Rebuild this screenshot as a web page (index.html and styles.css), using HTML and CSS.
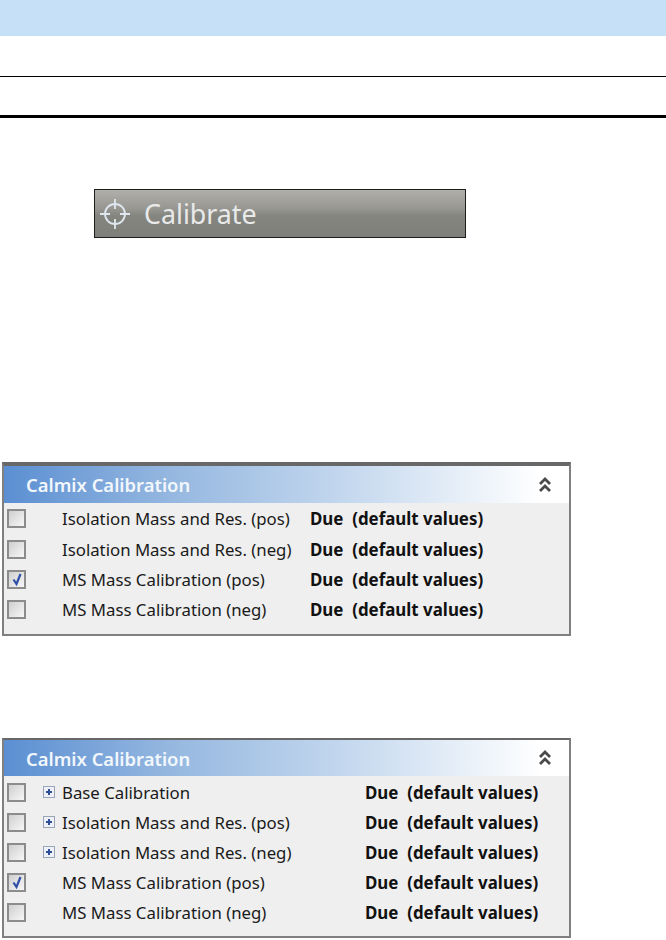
FILE: index.html
```html
<!DOCTYPE html>
<html lang="en">
<head>
<meta charset="utf-8">
<title>Calibrate</title>
<link rel="stylesheet" href="styles.css">
</head>
<body>
<div class="band"></div>
<div class="thin-rule"></div>
<div class="thick-rule"></div>
<div class="calibrate">
  <svg class="target" width="34" height="36" viewBox="0 0 34 36" fill="none" stroke="#dfe8f0">
    <circle cx="17" cy="18" r="10" stroke-width="1.8"/>
    <path d="M17 3V13M17 23V33M2 18H12M22 18H32" stroke-width="1.8"/>
  </svg>
  <span class="calibrate-label">Calibrate</span>
</div>
<section class="panel panel-a">
  <header class="panel-head"><span class="panel-title">Calmix Calibration</span>
    <svg class="chev" width="14" height="16" viewBox="0 0 14 16" fill="none" stroke="#4a4a4a" stroke-width="2.8"><path d="M2 7L7 2L12 7M2 14L7 9L12 14"/></svg>
  </header>
  <div class="rows">
    <div class="row"><span class="box"></span><span class="exp-slot"></span><span class="lbl">Isolation Mass and Res. (pos)</span><span class="status">Due&nbsp; (default values)</span></div>
    <div class="row"><span class="box"></span><span class="exp-slot"></span><span class="lbl">Isolation Mass and Res. (neg)</span><span class="status">Due&nbsp; (default values)</span></div>
    <div class="row"><span class="box"><svg width="14" height="14" viewBox="0 0 14 14" fill="none" stroke="#2f4fa8" stroke-width="2.2"><path d="M3.5 7.5L6.5 12L10.5 2"/></svg></span><span class="exp-slot"></span><span class="lbl">MS Mass Calibration (pos)</span><span class="status">Due&nbsp; (default values)</span></div>
    <div class="row"><span class="box"></span><span class="exp-slot"></span><span class="lbl">MS Mass Calibration (neg)</span><span class="status">Due&nbsp; (default values)</span></div>
  </div>
</section>
<section class="panel panel-b">
  <header class="panel-head"><span class="panel-title">Calmix Calibration</span>
    <svg class="chev" width="14" height="16" viewBox="0 0 14 16" fill="none" stroke="#4a4a4a" stroke-width="2.8"><path d="M2 7L7 2L12 7M2 14L7 9L12 14"/></svg>
  </header>
  <div class="rows">
    <div class="row"><span class="box"></span><span class="exp-slot"><span class="exp"></span></span><span class="lbl">Base Calibration</span><span class="status">Due&nbsp; (default values)</span></div>
    <div class="row"><span class="box"></span><span class="exp-slot"><span class="exp"></span></span><span class="lbl">Isolation Mass and Res. (pos)</span><span class="status">Due&nbsp; (default values)</span></div>
    <div class="row"><span class="box"></span><span class="exp-slot"><span class="exp"></span></span><span class="lbl">Isolation Mass and Res. (neg)</span><span class="status">Due&nbsp; (default values)</span></div>
    <div class="row"><span class="box"><svg width="14" height="14" viewBox="0 0 14 14" fill="none" stroke="#2f4fa8" stroke-width="2.2"><path d="M3.5 7.5L6.5 12L10.5 2"/></svg></span><span class="exp-slot"></span><span class="lbl">MS Mass Calibration (pos)</span><span class="status">Due&nbsp; (default values)</span></div>
    <div class="row"><span class="box"></span><span class="exp-slot"></span><span class="lbl">MS Mass Calibration (neg)</span><span class="status">Due&nbsp; (default values)</span></div>
  </div>
</section>
</body>
</html>
```
FILE: styles.css
```css
html, body { margin: 0; padding: 0; background: #fff; }
body { width: 666px; height: 940px; overflow: hidden; font-family: "Noto Sans", "DejaVu Sans", sans-serif; }
.band { height: 36px; background: #c6e0f7; }
.thin-rule { height: 1px; margin-top: 40px; background: #000; }
.thick-rule { height: 3px; margin-top: 38px; background: #000; }
.calibrate {
  box-sizing: border-box; width: 372px; height: 49px; margin: 71px 0 0 94px;
  border: 1px solid #1c1c1a;
  background: linear-gradient(#b0afab 0, #979691 40%, #858580 55%, #7f7f7a 100%);
  display: flex; align-items: center; padding-left: 3px;
}
.calibrate-label { margin-left: 12px; font-size: 26.8px; color: #e8eaea; }
.target { flex: none; }
.panel { box-sizing: border-box; width: 569px; margin-left: 2px; background: #efefef; border: 2px solid #808080; border-top: 4px solid #686868; }
.panel-a { height: 174px; margin-top: 224px; }
.panel-b { height: 200px; margin-top: 102px; border-top-width: 2px; }
.panel-head {
  height: 37px; box-sizing: border-box; display: flex; align-items: center; justify-content: space-between;
  padding: 0 17px 0 22px;
  background: linear-gradient(90deg, #5b8fd2 0, #96b8e0 30%, #c3d7ee 60%, #ffffff 95%);
}
.panel-b .panel-head { height: 36px; }
.panel-title { font-size: 18.4px; font-weight: 600; color: #f2f7fc; }
.chev { flex: none; }
.panel-a .rows { padding-top: 0.6px; }
.panel-b .rows { padding-top: 1px; }
.row { height: 30.3px; display: flex; align-items: center; padding-left: 3px; font-size: 16.8px; color: #1a1a1a; }
.panel-b .row { height: 30px; }
.box {
  box-sizing: border-box; width: 19px; height: 19px; flex: none; border: 2px solid #8c8c8c;
  background: linear-gradient(135deg, #cfcfcf, #f7f7f7); display: flex; align-items: center; justify-content: center;
}
.exp-slot { flex: none; display: flex; justify-content: flex-end; box-sizing: content-box; }
.panel-a .exp-slot { width: 36px; }
.panel-b .exp-slot { width: 29px; padding-right: 7px; }
.exp {
  box-sizing: border-box; width: 12px; height: 12px; border: 1px solid #9aa6b8; background: #eef2f8; position: relative;
}
.exp::before { content: ""; position: absolute; left: 2px; top: 4px; width: 6px; height: 2px; background: #2f4f98; }
.exp::after { content: ""; position: absolute; left: 4px; top: 2px; width: 2px; height: 6px; background: #2f4f98; }
.lbl { flex: none; white-space: nowrap; }
.panel-a .lbl { width: 248px; }
.panel-b .lbl { width: 303px; }
.status { font-weight: 700; font-size: 16.9px; white-space: nowrap; color: #111; }
```
